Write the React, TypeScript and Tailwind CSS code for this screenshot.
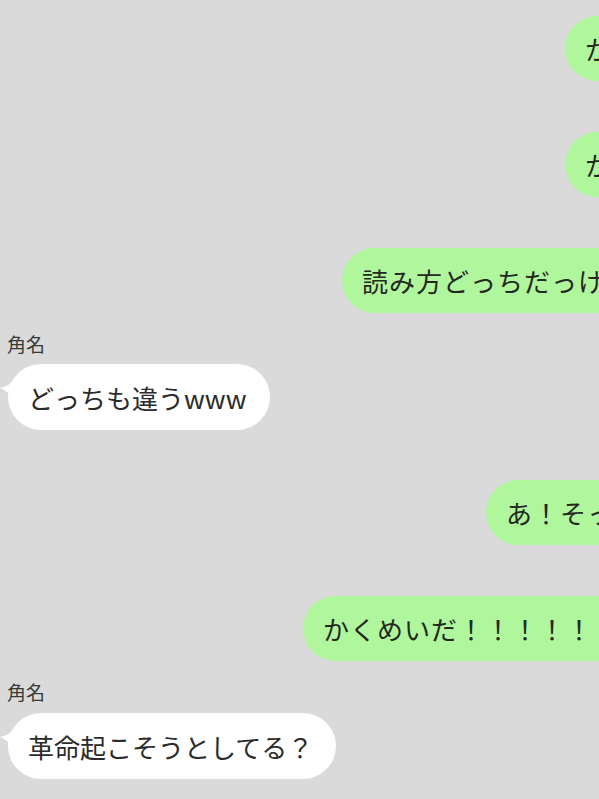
import React from "react";

const font = { fontFamily: '"Noto Sans CJK JP", "Noto Sans", sans-serif' };

function Green({ ml, mt, text }: { ml: string; mt: string; text: string }) {
  return (
    <div className={`flex ${mt}`}>
      <div
        className={`${ml} shrink-0 h-[65px] flex items-center whitespace-nowrap rounded-full bg-[#b0f69c] pl-[20px] pr-[24px] text-[26px] tracking-[1px] text-[#232820]`}
      >
        {text}
      </div>
    </div>
  );
}

function White({ text }: { text: string }) {
  return (
    <div className="relative flex pl-[8px]">
      <svg className="absolute left-0 top-[13px]" width="17" height="24" viewBox="0 0 17 24">
        <path d="M15 0 C13 6 6 10 0 11 C5 13 11 17 15 24 Z" fill="#ffffff" />
      </svg>
      <div className="shrink-0 h-[66px] flex items-center whitespace-nowrap rounded-full bg-white pl-[20px] pr-[23px] text-[26px] tracking-[0px] text-[#2b2b2b]">
        {text}
      </div>
    </div>
  );
}

function Name() {
  return (
    <div className="pl-[7px] h-[20px] text-[19px] leading-[20px] text-[#383838]">角名</div>
  );
}

export default function App() {
  return (
    <div
      className="w-[599px] h-[799px] overflow-hidden bg-[#dadada] pt-[16px] flex flex-col"
      style={font}
    >
      <Green ml="ml-[565px]" mt="mt-0" text="かくな？" />
      <Green ml="ml-[565px]" mt="mt-[51px]" text="かどな？" />
      <Green ml="ml-[342px]" mt="mt-[51px]" text="読み方どっちだっけ？" />
      <div className="mt-[21px]">
        <Name />
      </div>
      <div className="mt-[10px]">
        <White text="どっちも違うwww" />
      </div>
      <Green ml="ml-[486px]" mt="mt-[50px]" text="あ！そっか" />
      <Green ml="ml-[303px]" mt="mt-[51px]" text="かくめいだ！！！！！！" />
      <div className="mt-[21px]">
        <Name />
      </div>
      <div className="mt-[11px]">
        <White text="革命起こそうとしてる？" />
      </div>
    </div>
  );
}
